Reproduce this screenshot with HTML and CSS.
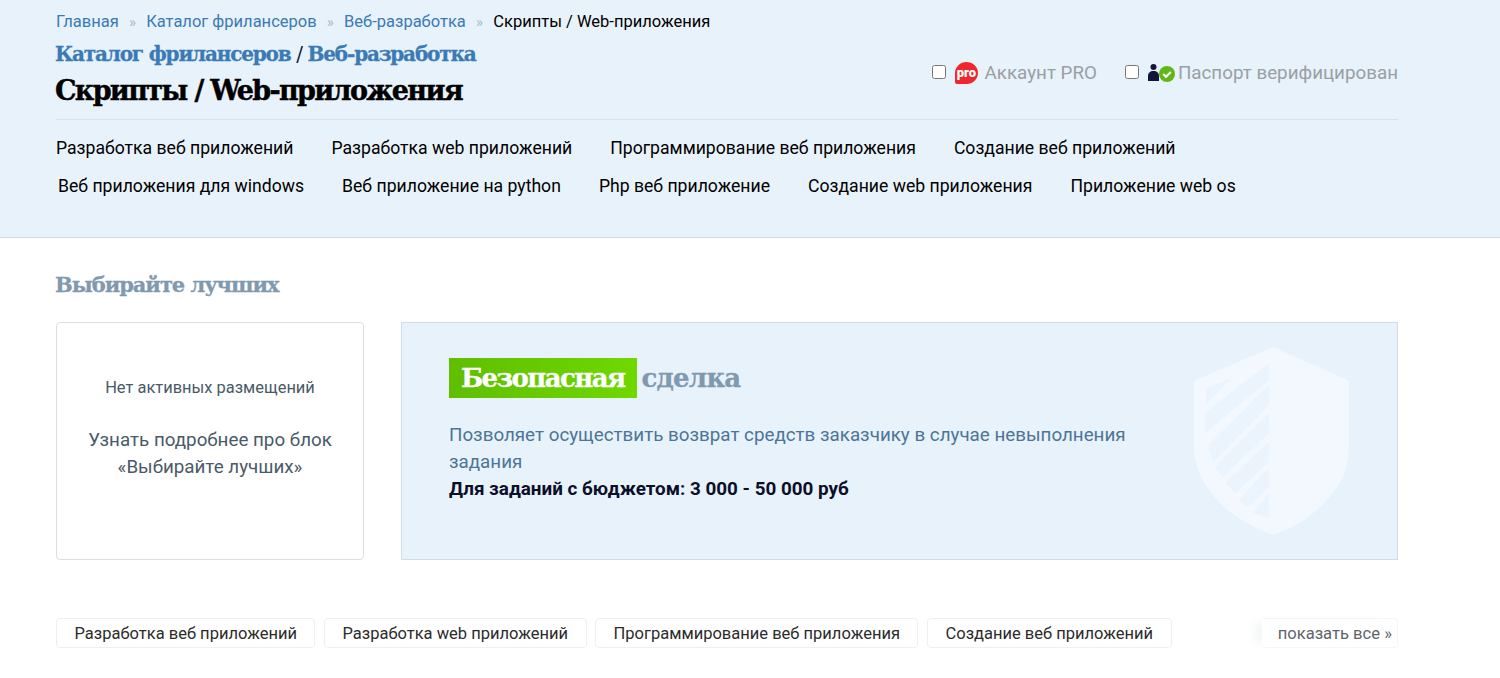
FILE: index.html
```html
<!DOCTYPE html>
<html lang="ru">
<head>
    <meta charset="UTF-8">
    <meta name="viewport" content="width=device-width, initial-scale=1.0">
    <title>Скрипты / Web-приложения</title>
    <link rel="stylesheet" href="styles.css">
</head>
<body>
    <header class="top">
        <nav class="crumbs">
            <a href="#">Главная</a><span class="sep">»</span><a href="#">Каталог фрилансеров</a><span class="sep">»</span><a href="#">Веб-разработка</a><span class="sep">»</span><span class="current">Скрипты / Web-приложения</span>
        </nav>
        <div class="head-row">
            <div class="titles">
                <div class="parent"><a href="#">Каталог фрилансеров</a> <span class="slash">/</span> <a href="#">Веб-разработка</a></div>
                <h1>Скрипты / Web-приложения</h1>
            </div>
            <div class="filters">
                <label class="filter">
                    <input type="checkbox">
                    <svg class="pro-icon" width="24" height="24" viewBox="0 0 24 24">
                        <path d="M12.500 1a11.500 11 0 1 1 0 22H3a2 2 0 0 1-2-2V12a11.500 11 0 0 1 11.500-11z" fill="#f0272d"/>
                        <text x="12.400" y="16" text-anchor="middle" class="pro-text">pro</text>
                    </svg>
                    <span>Аккаунт PRO</span>
                </label>
                <label class="filter">
                    <input type="checkbox">
                    <svg class="passport-icon" width="27" height="18" viewBox="0 0 27 18">
                        <circle cx="5.500" cy="3" r="3" fill="#11163a"/>
                        <path d="M0 17V12c0-3 2-5 5.500-5s5.500 2 5.500 5v5z" fill="#11163a"/>
                        <circle cx="19" cy="10" r="8" fill="#5fb816"/>
                        <path d="M15.200 10l2.800 2.800 4.800-4.800" fill="none" stroke="#fff" stroke-width="2"/>
                    </svg>
                    <span>Паспорт верифицирован</span>
                </label>
            </div>
        </div>
        <div class="tags">
            <div class="tag-row">
                <a href="#">Разработка веб приложений</a>
                <a href="#">Разработка web приложений</a>
                <a href="#">Программирование веб приложения</a>
                <a href="#">Создание веб приложений</a>
            </div>
            <div class="tag-row tag-row-second">
                <a href="#">Веб приложения для windows</a>
                <a href="#">Веб приложение на python</a>
                <a href="#">Php веб приложение</a>
                <a href="#">Создание web приложения</a>
                <a href="#">Приложение web os</a>
            </div>
        </div>
    </header>

    <main class="content">
        <h2>Выбирайте лучших</h2>
        <div class="promo">
            <div class="card-empty">
                <p class="none">Нет активных размещений</p>
                <p class="more">Узнать подробнее про блок<br>«Выбирайте лучших»</p>
            </div>
            <div class="safe">
                <div class="safe-title"><span class="safe-mark">Безопасная</span> <span class="safe-word">сделка</span></div>
                <p class="safe-text">Позволяет осуществить возврат средств заказчику в случае невыполнения задания</p>
                <p class="safe-budget">Для заданий с бюджетом: 3 000 - 50 000 руб</p>
                <svg class="shield" width="158" height="190" viewBox="0 0 158 190">
                    <path fill="#f2f8fe" d="M80 0L154 33c1 0 2 1 2 3V100c0 40-34 73-76 88C38 173 1 140 1 100V36c0-2 1-3 2-3z"/>
                    <path fill="#ebf4fc" d="M13 41L39 31 13 57zM12 66L76 16V33L12 86zM15 98L76 38V58L20 115zM22 120L76 66V86L30 130zM32 136L76 95V115L42 146zM46 153L76 121V140L55 160zM60 166L76 146V171z"/>
                </svg>
            </div>
        </div>
        <div class="chips">
            <a class="chip" href="#">Разработка веб приложений</a>
            <a class="chip" href="#">Разработка web приложений</a>
            <a class="chip" href="#">Программирование веб приложения</a>
            <a class="chip" href="#">Создание веб приложений</a>
            <a class="chip-more" href="#">показать все »</a>
        </div>
    </main>
</body>
</html>
```

FILE: styles.css
```css
body {
    margin: 0;
    font-family: Roboto, "Liberation Sans", sans-serif;
    font-size: 18px;
    color: #000;
    background: #fff;
}
a {
    text-decoration: none;
    color: inherit;
}
.top {
    height: 238px;
    box-sizing: border-box;
    padding: 12px 102px 0 56px;
    background: #e8f2fb;
    border-bottom: 1px solid #d3dde6;
}
.crumbs {
    font-size: 16.500px;
    line-height: 19px;
}
.crumbs a {
    color: #3a7ab5;
}
.sep {
    margin: 0 10.200px;
    color: #a9bccb;
    font-size: 15px;
}
.head-row {
    display: flex;
    justify-content: space-between;
    align-items: center;
    height: 87px;
    border-bottom: 1px solid #d8e2ea;
}
.titles {
    font-family: "DejaVu Serif", "Liberation Serif", serif;
    font-weight: bold;
    margin: -3px 0 0 -1px;
}
.parent {
    font-size: 20px;
    line-height: 28px;
    letter-spacing: -1.180px;
    color: #3a7ab5;
    -webkit-text-stroke: 0.300px #3a7ab5;
}
.slash {
    color: #11163a;
    font-weight: normal;
    -webkit-text-stroke: 0;
}
h1 {
    margin: 6px 0 0;
    font-size: 27px;
    line-height: 34px;
    letter-spacing: -1.680px;
    -webkit-text-stroke: 0.400px #000;
}
.filters {
    display: flex;
    gap: 28px;
    margin-top: -5px;
    font-size: 18.800px;
}
.filter {
    display: flex;
    align-items: center;
    color: #9a9fa3;
}
.filter input {
    width: 14px;
    height: 14px;
    margin: 0 8px 3px 0;
}
.pro-icon {
    margin-right: 7px;
}
.pro-text {
    font-family: Roboto, sans-serif;
    font-size: 13px;
    font-weight: 900;
    fill: #fff;
}
.passport-icon {
    margin: 0 3px 0 1px;
}
.tags {
    padding-top: 8px;
    font-size: 17.630px;
}
.tag-row {
    display: flex;
    gap: 38px;
    height: 39px;
    line-height: 40px;
}
.tag-row-second {
    padding-left: 2px;
    margin-top: -1px;
}
.content {
    padding: 0 102px 0 56px;
}
h2 {
    margin: 0 0 0 -1px;
    padding-top: 32px;
    font-family: "DejaVu Serif", "Liberation Serif", serif;
    font-size: 21px;
    line-height: 30px;
    letter-spacing: -1.050px;
    color: #7f99af;
    -webkit-text-stroke: 0.300px #7f99af;
}
.promo {
    display: flex;
    gap: 37px;
    margin-top: 22px;
    height: 238px;
}
.card-empty {
    width: 308px;
    box-sizing: border-box;
    border: 1px solid #d9e0e5;
    border-radius: 4px;
    text-align: center;
    color: #4a5a68;
}
.none {
    margin: 56px 0 0;
    font-size: 16.450px;
    line-height: 18px;
}
.more {
    margin: 30px 0 0;
    font-size: 18.800px;
    line-height: 27px;
}
.safe {
    position: relative;
    flex: 1;
    box-sizing: border-box;
    padding: 35px 47px 0;
    background: #e8f2fb;
    border: 1px solid #d3dde6;
}
.safe-title {
    font-family: "DejaVu Serif", "Liberation Serif", serif;
    font-weight: bold;
    font-size: 26px;
    line-height: 40px;
    color: #7f99af;
}
.safe-mark {
    display: inline-block;
    height: 40px;
    padding: 0 12px;
    letter-spacing: -1.600px;
    color: #fff;
    background: linear-gradient(90deg, #5fbe00, #6fd800);
    -webkit-text-stroke: 0.300px #fff;
}
.safe-word {
    letter-spacing: -0.800px;
    margin-left: -4px;
    -webkit-text-stroke: 0.300px #7f99af;
}
.safe-text {
    margin: 24px 0 0;
    width: 700px;
    font-size: 18.800px;
    line-height: 27px;
    color: #4c7596;
}
.safe-budget {
    margin: 0;
    font-size: 18.850px;
    font-weight: 700;
    line-height: 27px;
    color: #0b0f2a;
}
.shield {
    position: absolute;
    top: 24px;
    right: 46px;
}
.chips {
    display: flex;
    gap: 8.500px;
    margin-top: 58px;
    font-size: 16.500px;
}
.chip {
    height: 30px;
    box-sizing: border-box;
    padding: 0 17.500px;
    line-height: 29px;
    color: #2b2b2b;
    border: 1px solid #edf0f3;
    border-radius: 4px;
}
.chip-more {
    margin-left: auto;
    height: 30px;
    box-sizing: border-box;
    padding: 0 5px 0 16px;
    line-height: 29px;
    font-size: 16.600px;
    color: #5e6469;
    border: 1px solid #f3f5f7;
    border-left: 0;
    border-radius: 4px;
    box-shadow: -12px 0 10px -4px #f4f6f7;
}
```
